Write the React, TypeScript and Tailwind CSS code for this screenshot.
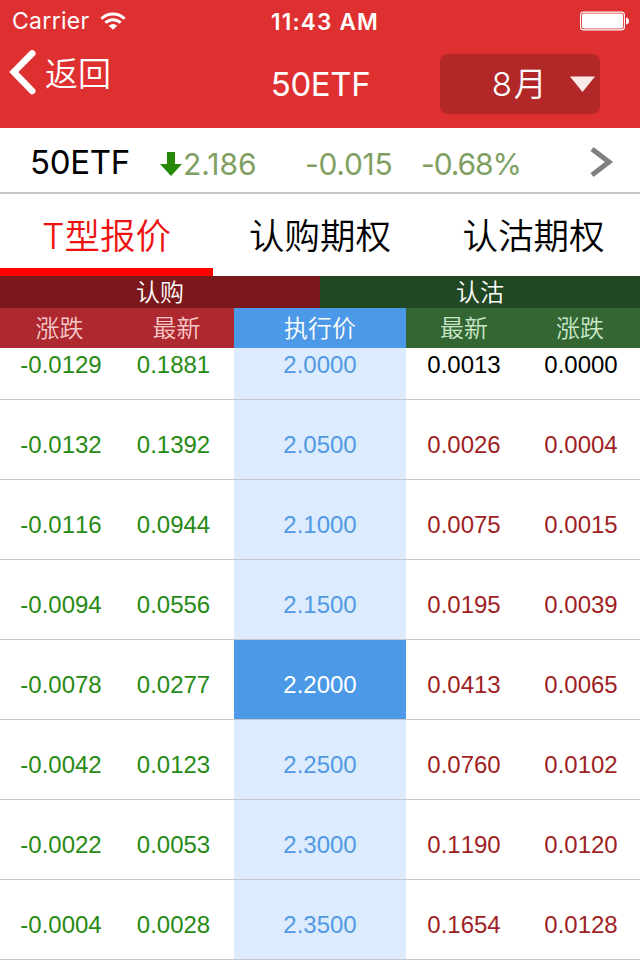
type Row = [string, string, string, string, string];

const rows: Row[] = [
  ['-0.0129', '0.1881', '2.0000', '0.0013', '0.0000'],
  ['-0.0132', '0.1392', '2.0500', '0.0026', '0.0004'],
  ['-0.0116', '0.0944', '2.1000', '0.0075', '0.0015'],
  ['-0.0094', '0.0556', '2.1500', '0.0195', '0.0039'],
  ['-0.0078', '0.0277', '2.2000', '0.0413', '0.0065'],
  ['-0.0042', '0.0123', '2.2500', '0.0760', '0.0102'],
  ['-0.0022', '0.0053', '2.3000', '0.1190', '0.0120'],
  ['-0.0004', '0.0028', '2.3500', '0.1654', '0.0128'],
];

const AT_THE_MONEY = '2.2000';

function StatusBar() {
  return (
    <div className="grid h-10 grid-cols-3 items-center text-[23px] leading-[41px]">
      <div className="flex items-center pl-[12px]">
        <span className="w-[88px] pt-px tracking-[0.3px]">Carrier</span>
        <svg width="26" height="18" viewBox="0 0 26 18" fill="none" stroke="white" strokeWidth="3">
          <path d="M1.4 6.7a16.6 16.6 0 0 1 23.2 0" />
          <path d="M5.4 10.8a10.8 10.8 0 0 1 15.2 0" />
          <path d="M8.7 13.7Q13 10.4 17.3 13.7L13 17.8Z" fill="white" stroke="none" />
        </svg>
      </div>
      <div className="pl-[10px] text-center text-[22.5px] font-semibold tracking-[1.2px] whitespace-nowrap">11:43 AM</div>
      <div className="flex justify-end pr-[11px]">
        <svg width="49" height="20" viewBox="0 0 49 20">
          <rect x="0.6" y="1.1" width="43.8" height="17.8" rx="3" fill="none" stroke="white" strokeWidth="1.1" />
          <rect x="2" y="2.5" width="41" height="15" rx="1.8" fill="white" />
          <path d="M46 6.5q3 .5 3 3.5t-3 3.5z" fill="white" />
        </svg>
      </div>
    </div>
  );
}

function NavBar() {
  return (
    <div className="grid h-[88px] grid-cols-3">
      <div className="flex h-[68px] items-start pl-[9px]">
        <svg className="mt-[10px]" width="27" height="45" viewBox="0 0 27 45" fill="none" stroke="white" strokeWidth="6.6">
          <path d="M23.2 3.4L4.8 22 23.2 41" strokeLinecap="round" strokeLinejoin="miter" />
        </svg>
        <span className="ml-[9px] pt-px text-[33px] leading-[66px] font-[350]">返回</span>
      </div>
      <div className="pl-px text-center text-[33px] leading-[88px] font-normal tracking-[-0.4px]">50ETF</div>
      <div className="flex pt-[14px] pl-[13px]">
        <div className="flex h-[60px] w-[160px] items-center rounded-lg bg-[#b22727] pl-[52px]">
          <span className="w-[77px] text-[33px] leading-[60px] font-[350] tracking-[2px] whitespace-nowrap">8月</span>
          <svg className="shrink-0" width="27" height="17" viewBox="0 0 27 17">
            <path d="M1 .5h25L13.5 16z" fill="#fbe9e9" />
          </svg>
        </div>
      </div>
    </div>
  );
}

function Quote() {
  return (
    <div className="flex h-[66px] items-center border-b-2 border-[#c5c5c6] text-[30px] font-normal text-[#7fa062]">
      <span className="w-[129px] shrink-0 pt-[5px] pl-[30px] text-[33px] tracking-[-0.3px] text-black">50ETF</span>
      <svg className="mt-[7px] ml-[31px] shrink-0" width="22" height="24" viewBox="0 0 22 24">
        <path d="M7 0h8v12h7L11 24 0 12h7z" fill="#278a07" />
      </svg>
      <span className="w-[123px] shrink-0 pt-[9px] pl-px">2.186</span>
      <span className="w-[116px] shrink-0 pt-[9px] tracking-[-0.3px]">-0.015</span>
      <span className="w-[169px] shrink-0 pt-[9px] tracking-[-1.1px]">-0.68%</span>
      <svg className="mt-[4px] shrink-0" width="24" height="30" viewBox="0 0 24 30" fill="none" stroke="#808080" strokeWidth="5">
        <path d="M2 2L19 15 2 28" />
      </svg>
    </div>
  );
}

function Tabs() {
  return (
    <div className="flex h-[82px] text-[35.5px] leading-[86px] font-[350] text-black">
      <div className="w-[213px] border-b-8 border-[#ff0000] text-center text-[#ee1111]">
        <div className="h-[74px]">T型报价</div>
      </div>
      <div className="w-[214px] text-center">认购期权</div>
      <div className="w-[213px] text-center">认沽期权</div>
    </div>
  );
}

function TableHeader() {
  return (
    <div className="text-center text-[24px] font-[350] text-white">
      <div className="flex h-8 leading-[34px]">
        <div className="w-1/2 bg-[#7b181b]">认购</div>
        <div className="w-1/2 bg-[#214822]">认沽</div>
      </div>
      <div className="flex h-10 leading-[42px]">
        <div className="flex w-[234px] bg-[#ae292f] text-[#f5c8c9]">
          <div className="w-[119px]">涨跌</div>
          <div className="w-[115px]">最新</div>
        </div>
        <div className="w-[172px] bg-[#4b99e7]">执行价</div>
        <div className="flex w-[234px] bg-[#336633] text-[#c8e6c8]">
          <div className="w-[116px]">最新</div>
          <div className="w-[116px]">涨跌</div>
        </div>
      </div>
    </div>
  );
}

function OptionRow({ row }: { row: Row }) {
  const [callChange, callLast, strike, putLast, putChange] = row;
  const strikeColor = strike === AT_THE_MONEY ? 'bg-[#4b99e7] text-white' : 'bg-[#dcecfe] text-[#5199e3]';
  const putLastColor = putLast === '0.0013' ? 'text-black' : 'text-[#a01f24]';
  const putChangeColor = putChange === '0.0000' ? 'text-black' : 'text-[#a01f24]';
  return (
    <div className="flex h-20 shrink-0 border-b border-[#c8c7cc] text-center font-['Liberation_Sans',sans-serif] text-[24px] leading-[90px] text-[#278a14] [font-kerning:none]">
      <div className="w-[122px]">{callChange}</div>
      <div className="w-[103px]">{callLast}</div>
      <div className={`ml-[9px] h-[79px] w-[172px] ${strikeColor}`}>{strike}</div>
      <div className={`w-[116px] ${putLastColor}`}>{putLast}</div>
      <div className={`w-[118px] ${putChangeColor}`}>{putChange}</div>
    </div>
  );
}

export default function App() {
  return (
    <div className="flex h-[960px] w-[640px] flex-col overflow-hidden bg-white font-['Inter','Noto_Sans_CJK_SC',sans-serif]">
      <header className="h-[128px] shrink-0 bg-[#df3031] text-white">
        <StatusBar />
        <NavBar />
      </header>
      <Quote />
      <Tabs />
      <TableHeader />
      <div className="flex h-[612px] flex-col justify-end overflow-hidden">
        {rows.map((row) => (
          <OptionRow key={row[2]} row={row} />
        ))}
      </div>
    </div>
  );
}
